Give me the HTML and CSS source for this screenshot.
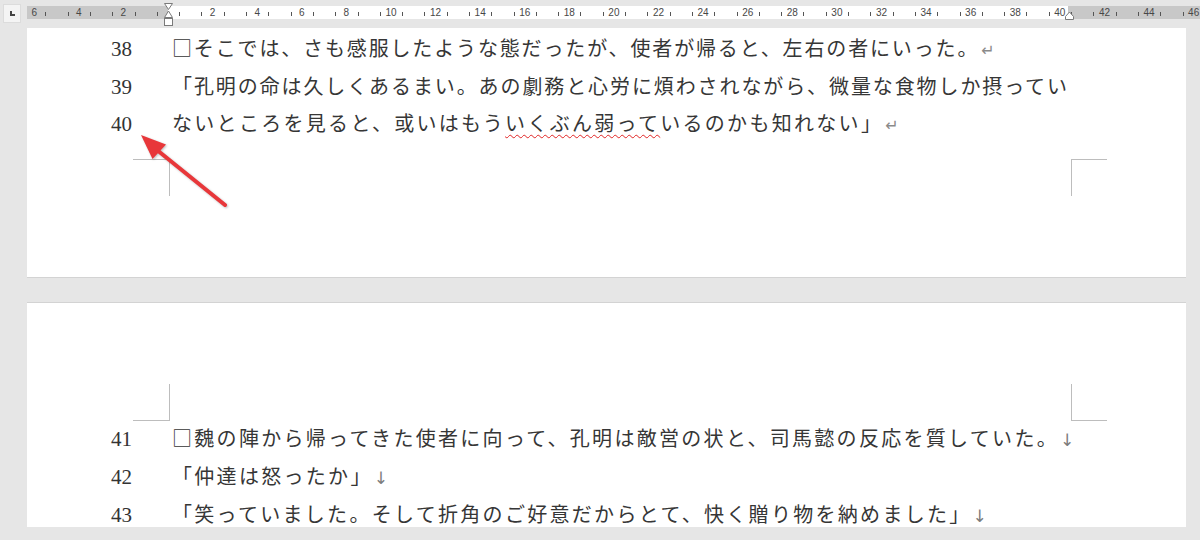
FILE: index.html
```html
<!DOCTYPE html>
<html lang="ja">
<head>
    <meta charset="UTF-8">
    <title>縦書き原稿 - 行番号表示</title>
    <link rel="stylesheet" href="styles.css">
</head>
<body>

    <!-- Ruler -->
    <div class="topbar">
        <div class="tabsel"><i></i></div>
        <div class="ruler">
            <div class="scale">
                <span>6</span><span></span><span>4</span><span></span><span>2</span><span></span>
                <span></span><span></span>
                <span>2</span><span></span><span>4</span><span></span><span>6</span><span></span>
                <span>8</span><span></span><span>10</span><span></span><span>12</span><span></span>
                <span>14</span><span></span><span>16</span><span></span><span>18</span><span></span>
                <span>20</span><span></span><span>22</span><span></span><span>24</span><span></span>
                <span>26</span><span></span><span>28</span><span></span><span>30</span><span></span>
                <span>32</span><span></span><span>34</span><span></span><span>36</span><span></span>
                <span>38</span><span></span><span>40</span><span></span><span>42</span><span></span>
                <span>44</span><span></span><span>46</span>
            </div>
        </div>
        <svg class="markers" width="1200" height="28" viewBox="0 0 1200 28">
            <path d="M164.5 3.5h8l-4 6z" fill="#fff" stroke="#7a7a7a"/>
            <path d="M168.5 11l4 6.5h-8z" fill="#fff" stroke="#7a7a7a"/>
            <rect x="164.5" y="18.5" width="8" height="7" fill="#fff" stroke="#7a7a7a"/>
            <path d="M1065.5 19.5v-3l4-4.5 4 4.5v3z" fill="#fff" stroke="#7a7a7a"/>
        </svg>
    </div>

    <div class="doc">
        <!-- page 1 -->
        <div class="page page1">
            <div class="lines">
                <div class="line"><span class="num">38</span><span class="txt t38">□そこでは、さも感服したような態だったが、使者が帰ると、左右の者にいった。</span><span class="mark">↵</span></div>
                <div class="line"><span class="num">39</span><span class="txt t39">「孔明の命は久しくあるまい。あの劇務と心労に煩わされながら、微量な食物しか摂ってい</span></div>
                <div class="line"><span class="num">40</span><span class="txt">ないところを見ると、或いはもう<span class="typo">いくぶん弱って</span>いるのかも知れない」</span><span class="mark">↵</span></div>
            </div>
            <div class="corners bottom">
                <div class="corner left"></div>
                <div class="corner right"></div>
            </div>
        </div>

        <!-- page 2 -->
        <div class="page page2">
            <div class="corners top">
                <div class="corner left"></div>
                <div class="corner right"></div>
            </div>
            <div class="lines">
                <div class="line"><span class="num">41</span><span class="txt">□魏の陣から帰ってきた使者に向って、孔明は敵営の状と、司馬懿の反応を質していた。</span><span class="mark down">↓</span></div>
                <div class="line"><span class="num">42</span><span class="txt">「仲達は怒ったか」</span><span class="mark down">↓</span></div>
                <div class="line"><span class="num">43</span><span class="txt">「笑っていました。そして折角のご好意だからとて、快く贈り物を納めました」</span><span class="mark down">↓</span></div>
            </div>
        </div>
    </div>

    <!-- annotation arrow -->
    <svg class="arrow" width="1200" height="540" viewBox="0 0 1200 540">
        <line x1="225" y1="205" x2="157" y2="150" stroke="#e8373a" stroke-width="4" stroke-linecap="round"/>
        <path d="M141 135L166 144.5L152.5 159z" fill="#e8373a"/>
    </svg>

</body>
</html>
```

FILE: styles.css
```css
body {
    margin: 0;
    width: 1200px;
    height: 540px;
    overflow: hidden;
    position: relative;
    background: #e6e6e6;
    font-family: "Noto Sans CJK JP", sans-serif;
}

/* ruler */
.topbar { position: relative; display: flex; align-items: flex-start; height: 28px; }
.tabsel {
    flex: none;
    width: 18px;
    height: 19px;
    margin: 4px 0 0 3px;
    box-sizing: border-box;
    background: #f4f4f4;
    border: 1px solid #dcdcdc;
    display: flex;
    align-items: center;
    justify-content: center;
}
.tabsel i { width: 3px; height: 3px; border-left: 2px solid #444; border-bottom: 2px solid #444; }
.ruler {
    flex: 1;
    height: 13px;
    margin: 6px 0 0 6px;
    overflow: hidden;
    background: linear-gradient(to right, #c8c8c8 0 141px, #fff 141px 1041px, #c8c8c8 1041px);
}
.scale { display: flex; margin-left: -3.95px; }
.scale span {
    flex: none;
    width: 22.3px;
    height: 13px;
    text-align: center;
    font: 10px/13px "Liberation Sans", sans-serif;
    color: #474747;
    background: linear-gradient(#555, #555) no-repeat 0 6px / 1px 4px;
}
.markers { position: absolute; left: 0; top: 0; }

/* pages */
.doc { padding: 0 14px 0 27px; }
.page { background: #fff; overflow: hidden; }
.page1 { height: 248px; padding-top: 1px; border-bottom: 1px solid #d3d3d3; }
.page2 { height: 143px; padding-top: 81px; margin-top: 24px; border-top: 1px solid #d3d3d3; }
.page2 .lines { margin-top: -2px; }

.line { height: 37.5px; line-height: 37.5px; white-space: nowrap; color: #363636; }
.page2 .line { height: 38px; line-height: 38px; }
.num {
    display: inline-block;
    width: 105px;
    margin-right: 40px;
    text-align: right;
    font: 21px/1 "Liberation Serif", serif;
    color: #333;
}
.txt { font-size: 20px; letter-spacing: 2.3px; }
.t38 { letter-spacing: 1.85px; }
.t39 { letter-spacing: 1.9px; }
.typo { text-decoration: underline wavy #e02424; text-decoration-thickness: 1px; text-underline-offset: 3px; }
.mark { font: 16px/1 "DejaVu Sans", sans-serif; color: #8a8a8a; margin-left: 2px; }
.mark.down { font-size: 17px; margin-left: 1px; color: #7c7c7c; }

/* margin corner guides */
.corners { display: flex; justify-content: space-between; padding: 0 79px 0 106px; }
.corners.bottom { margin-top: 17.5px; }
.corner { width: 36px; height: 36px; border: 0 solid #bdbdbd; }
.bottom .corner.left { border-top-width: 1px; border-right-width: 1px; }
.bottom .corner.right { width: 35px; border-top-width: 1px; border-left-width: 1px; }
.top .corner.left { border-bottom-width: 1px; border-right-width: 1px; }
.top .corner.right { width: 35px; border-bottom-width: 1px; border-left-width: 1px; }

.arrow { position: absolute; left: 0; top: 0; pointer-events: none; filter: drop-shadow(1px 1px 1px rgba(0, 0, 0, 0.25)); }
```
